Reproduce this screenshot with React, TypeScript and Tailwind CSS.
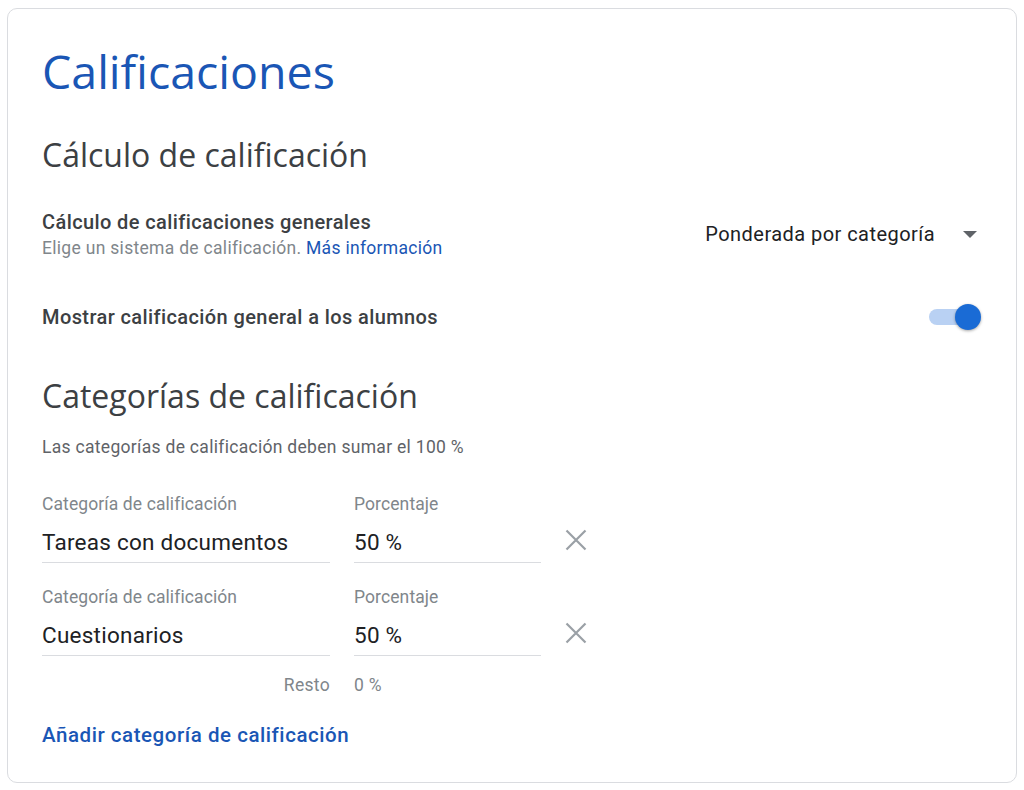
import React from "react";

function XIcon() {
  return (
    <svg width="24" height="24" viewBox="0 0 24 24" className="shrink-0">
      <path d="M2.5 2.5 L21.5 21.5 M21.5 2.5 L2.5 21.5" stroke="#9aa0a6" strokeWidth="2.2" fill="none" />
    </svg>
  );
}

function Row({ name, className }: { name: string; className?: string }) {
  return (
    <div className={"flex items-start " + (className ?? "")}>
      <div className="w-[288px] flex flex-col">
        <div className="text-[17.5px] leading-[22px] tracking-[0.1px] text-[#80868b]">Categoría de calificación</div>
        <div className="mt-[13px] text-[22.5px] leading-[28px] tracking-[0.25px] text-[#202124] pb-[6px] border-b border-[#dadce0]">{name}</div>
      </div>
      <div className="ml-[24px] w-[187px] flex flex-col">
        <div className="text-[17.5px] leading-[22px] tracking-[0.1px] text-[#80868b]">Porcentaje</div>
        <div className="mt-[13px] text-[22.5px] leading-[28px] tracking-[0.25px] text-[#202124] pb-[6px] border-b border-[#dadce0]">50 %</div>
      </div>
      <div className="ml-[23px] mt-[35px]">
        <XIcon />
      </div>
    </div>
  );
}

export default function App() {
  return (
    <div className="w-[1024px] h-[790px] bg-white pt-[8px] pl-[7px]" style={{ fontFamily: "Roboto, 'Liberation Sans', sans-serif" }}>
      <div className="w-[1010px] h-[775px] rounded-[10px] border border-[#dadce0] pl-[34px] pr-[34px] flex flex-col">
        <h1 className="mt-[34px] text-[46.5px] leading-[56px] text-[#1a56b5]" style={{ fontFamily: "'Open Sans', sans-serif" }}>Calificaciones</h1>
        <h2 className="mt-[36px] text-[32px] leading-[40px] text-[#3c4043]" style={{ fontFamily: "'Open Sans', sans-serif" }}>Cálculo de calificación</h2>
        <div className="mt-[35px] flex items-start justify-between">
          <div className="flex flex-col">
            <div className="text-[20px] leading-[24px] tracking-[0.4px] font-medium text-[#3c4043]">Cálculo de calificaciones generales</div>
            <div className="mt-[3px] text-[17.5px] leading-[22px] tracking-[0.3px] text-[#80868b]">
              Elige un sistema de calificación. <span className="text-[#1a56b5]">Más información</span>
            </div>
          </div>
          <div className="flex items-center mt-[12px]">
            <span className="text-[20px] leading-[24px] tracking-[0.45px] text-[#202124]">Ponderada por categoría</span>
            <svg width="14" height="7" viewBox="0 0 14 7" className="ml-[28px] mr-[5px]">
              <path d="M0 0 L14 0 L7 7 Z" fill="#5f6368" />
            </svg>
          </div>
        </div>
        <div className="mt-[45px] h-[26px] flex items-center justify-between">
          <div className="text-[20px] leading-[24px] tracking-[0.4px] font-medium text-[#3c4043]">Mostrar calificación general a los alumnos</div>
          <div className="relative w-[53px] h-[26px] mr-[1px]">
            <div className="absolute left-[1px] top-[5px] w-[44px] h-[16px] rounded-full bg-[#b9d1f3]" />
            <div className="absolute right-[0px] top-[0px] w-[26px] h-[26px] rounded-full bg-[#1a6bd5] shadow-[0_1px_3px_rgba(0,0,0,0.35)]" />
          </div>
        </div>
        <h2 className="mt-[46px] text-[32px] leading-[40px] text-[#3c4043]" style={{ fontFamily: "'Open Sans', sans-serif" }}>Categorías de calificación</h2>
        <div className="mt-[20px] text-[17.5px] leading-[22px] tracking-[0.3px] text-[#5f6368]">Las categorías de calificación deben sumar el 100 %</div>
        <Row name="Tareas con documentos" className="mt-[35px]" />
        <Row name="Cuestionarios" className="mt-[23px]" />
        <div className="mt-[18px] flex text-[17.5px] leading-[22px] tracking-[0.3px] text-[#80868b]">
          <div className="w-[288px] text-right">Resto</div>
          <div className="ml-[24px]">0 %</div>
        </div>
        <div className="mt-[27px] text-[20.5px] leading-[24px] tracking-[0.55px] font-medium text-[#1a56b5]">Añadir categoría de calificación</div>
      </div>
    </div>
  );
}
